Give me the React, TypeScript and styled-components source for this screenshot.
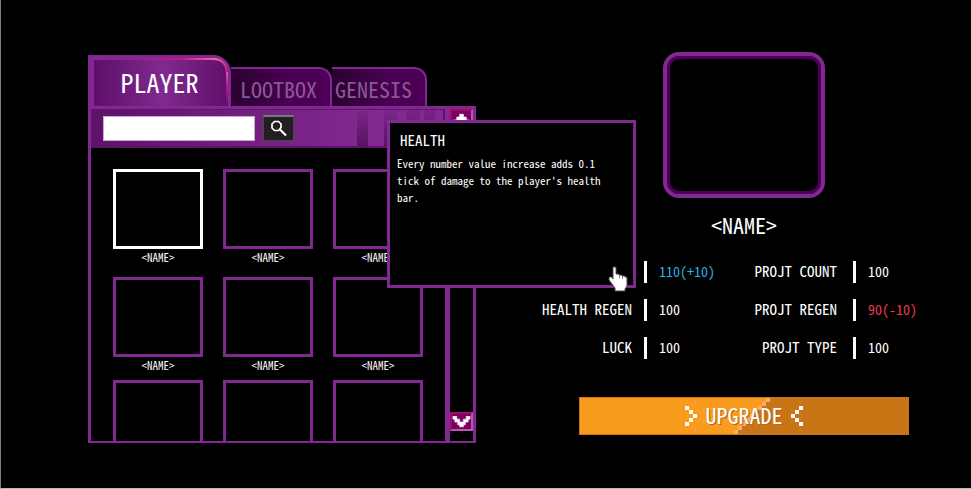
import React from "react";
import styled, { createGlobalStyle } from "styled-components";

const violet = "#812990";
const deep = "#4b0055";
const mono = `"Noto Sans CJK JP", "Liberation Mono", monospace`;

const GlobalStyle = createGlobalStyle`
  *, *::before, *::after { box-sizing: border-box; }
  html, body, #root { min-height: 100vh; }
  body {
    margin: 0;
    background: #000;
    color: #fff;
    font-family: ${mono};
    font-feature-settings: "hwid";
  }
  button, input {
    font: inherit;
    font-feature-settings: inherit;
    color: inherit;
    border: 0;
    margin: 0;
    padding: 0;
    background: none;
  }
  dl, dt, dd, p, h1, h2, h3, ul, li { margin: 0; padding: 0; list-style: none; font-weight: 400; }
`;

const Page = styled.main`
  display: grid;
  grid-template-columns: minmax(0, 388fr) minmax(0, 398fr);
  align-items: start;
  gap: 69px;
  min-height: 100vh;
  padding: 52px 28px 32px 87px;
  border-left: 1px solid #808080;
  border-bottom: 1px solid #b9b9b9;
`;

const Inventory = styled.section`
  padding-top: 3px;
`;

const Tabs = styled.div`
  display: flex;
  align-items: flex-end;
`;

const ActiveTab = styled.button`
  height: 51px;
  width: 143px;
  padding: 5px 3px 0 6px;
  background: ${violet};
  border-radius: 0 18px 0 0;
`;

const ActiveTabFace = styled.span`
  position: relative;
  display: flex;
  align-items: center;
  justify-content: center;
  height: 46px;
  padding: 0 3px 2px 0;
  background: linear-gradient(90deg, #5e1069, ${violet} 52%, #5e1069);
  border-radius: 0 14px 0 0;
  font-size: 26px;
  line-height: 26px;
`;

const Glow = styled.svg`
  position: absolute;
  top: -2px;
  right: 0;
  width: 100%;
  height: 48px;
`;

const Tab = styled.button<{ $width: number; $inset: number }>`
  height: 39px;
  width: ${(p) => p.$width}px;
  padding-left: ${(p) => p.$inset}px;
  border: solid ${violet};
  border-width: 2px 2px 0 0;
  border-radius: 0 13px 0 0;
  background: linear-gradient(90deg, #2a0030, ${deep} 60%);
  color: #875a90;
  font-size: 22px;
  line-height: 36px;
  text-align: left;
  white-space: nowrap;
`;

const Frame = styled.div`
  display: grid;
  grid-template-columns: minmax(0, 1fr) 28px;
  border: 3px solid ${violet};
  border-bottom-width: 2px;
`;

const Toolbar = styled.form`
  display: flex;
  align-items: center;
  gap: 8px;
  height: 39px;
  padding: 0 0 0 12px;
  border: solid #5e1269;
  border-width: 1px 2px 2px 0;
  background:
    linear-gradient(#7c278b, #571262) right 75px top / 11px 100% no-repeat,
    linear-gradient(#7c278b, #571262) right 46px top / 13px 100% no-repeat,
    linear-gradient(#772486, #64196f) right 23px top / 14px 100% no-repeat,
    linear-gradient(#772486, #64196f) right 8px top / 11px 100% no-repeat,
    linear-gradient(90deg, #5e1269, ${violet} 80%);
`;

const SearchInput = styled.input`
  width: 152px;
  height: 25px;
  padding: 0 6px;
  background: #fff;
  border: 1px solid #c9a9ce;
  color: #000;
  font-size: 14px;
`;

const SearchButton = styled.button`
  display: flex;
  align-items: center;
  justify-content: center;
  width: 31px;
  height: 26px;
  background: #231f20;
  border: 1px solid #4b4a4b;
  border-top: 2px solid #77787b;
`;

const Items = styled.ul`
  display: grid;
  grid-template-columns: repeat(3, minmax(0, 1fr));
  grid-template-rows: 108px 103px 80px;
  column-gap: 20px;
  height: 293px;
  padding: 21px 22px 0;
  overflow: hidden;
`;

const Slot = styled.button<{ $selected?: boolean }>`
  display: block;
  width: 100%;
  height: 80px;
  border: 3px solid ${(p) => (p.$selected ? "#fff" : violet)};
`;

const SlotName = styled.span`
  display: block;
  font-size: 11px;
  line-height: 16px;
  text-align: center;
`;

const ScrollBar = styled.div`
  display: flex;
  flex-direction: column;
  justify-content: space-between;
  padding-bottom: 10px;
  border-left: 5px solid ${violet};
`;

const ScrollButton = styled.button`
  display: flex;
  align-items: center;
  justify-content: center;
  height: 19px;
  background: #7c0064;
  border: 2px solid #b85aa4;
  border-left-color: #a20c64;
  border-top-color: #a20c64;
`;

const Character = styled.section`
  display: flex;
  flex-direction: column;
  align-items: center;
`;

const Portrait = styled.div`
  width: 162px;
  height: 146px;
  border: 4px solid ${violet};
  border-radius: 16px;
  box-shadow: inset 0 0 0 3px ${deep};
`;

const CharacterName = styled.h1`
  margin-top: 12px;
  font-size: 22px;
  line-height: 28px;
`;

const Stats = styled.dl`
  display: grid;
  grid-template-columns: minmax(0, 209fr) minmax(0, 189fr);
  gap: 16px 0;
  width: 100%;
  margin-top: 23px;
`;

const Stat = styled.div`
  position: relative;
  display: grid;
  grid-template-columns: 99px minmax(0, 1fr);
  height: 22px;
  line-height: 20px;
  white-space: nowrap;
`;

const StatLabel = styled.dt`
  display: flex;
  justify-content: flex-end;
  padding-right: 12px;
  font-size: 15px;
  ${Stat}:nth-child(even) & { padding-right: 16px; }
`;

const StatValue = styled.dd<{ $tone?: string }>`
  padding-left: 12px;
  border-left: 3px solid #fff;
  color: ${(p) => p.$tone ?? "#fff"};
  font-size: 14px;
`;

const Tooltip = styled.aside`
  position: absolute;
  z-index: 2;
  left: -158px;
  bottom: -5px;
  width: 249px;
  height: 168px;
  padding: 7px 28px 7px 7px;
  border: 3px solid ${violet};
  background: #000;
  white-space: normal;
`;

const TooltipTitle = styled.h2`
  padding-left: 3px;
  font-size: 15px;
  line-height: 20px;
`;

const TooltipText = styled.p`
  margin-top: 5px;
  font-size: 11px;
  line-height: 17px;
`;

const Hand = styled.svg`
  position: absolute;
  right: 5px;
  bottom: -7px;
`;

const Upgrade = styled.button`
  position: relative;
  display: flex;
  align-items: center;
  justify-content: center;
  gap: 8px;
  width: 83%;
  height: 38px;
  margin-top: 38px;
  border: 1px solid #c97516;
  background: linear-gradient(90deg, #f99b1c calc(50% - 10px), #c97516 calc(50% - 10px));
  font-size: 22px;
  line-height: 32px;
  text-shadow: 1px 1px 0 #b0651a;
`;

const Stairs = styled.svg`
  position: absolute;
  top: 0;
  left: calc(50% - 10px);
`;

const UpgradeText = styled.span`
  position: relative;
  padding-bottom: 4px;
`;

const Chevron = ({ flip = false }: { flip?: boolean }) => (
  <svg width="12" height="20" viewBox="0 0 12 20" shapeRendering="crispEdges" aria-hidden="true">
    <path
      fill="#fff"
      d={
        flip
          ? "M8 0h4v4H8zM4 4h4v4H4zM0 8h4v4H0zM4 12h4v4H4zM8 16h4v4H8z"
          : "M0 0h4v4H0zM4 4h4v4H4zM8 8h4v4H8zM4 12h4v4H4zM0 16h4v4H0z"
      }
    />
  </svg>
);

const PixelArrow = ({ up = false }: { up?: boolean }) => {
  const d = up
    ? "M8 1h4v3H8zM5 4h10v3H5zM2 7h6v3H2zM12 7h6v3h-6z"
    : "M1 0h4v3H1zM15 0h4v3h-4zM3 3h5v3H3zM12 3h5v3h-5zM6 6h8v3H6zM8 9h4v2H8z";
  return (
    <svg width="19" height="12" viewBox="0 0 20 12" aria-hidden="true">
      <path d={d} fill="#fff" stroke="#d9a3cd" strokeWidth="1" paintOrder="stroke" />
    </svg>
  );
};

const SearchIcon = () => (
  <svg width="17" height="17" viewBox="0 0 17 17" fill="none" stroke="#fff" aria-hidden="true">
    <path strokeWidth="1.7" d="M4.5 1.5h4l2.5 2.5v3.5L8.5 10.5h-4L2 8V4z" />
    <path strokeWidth="2.2" d="M10 9.5l6 6" />
  </svg>
);

const stairSteps = Array.from({ length: 9 }, (_, i) => i);

const stats: { label: string; value: string; tone?: string }[] = [
  { label: "HEALTH", value: "110(+10)", tone: "#1fb6e0" },
  { label: "PROJT COUNT", value: "100" },
  { label: "HEALTH REGEN", value: "100" },
  { label: "PROJT REGEN", value: "90(-10)", tone: "#f0384f" },
  { label: "LUCK", value: "100" },
  { label: "PROJT TYPE", value: "100" },
];

const namedSlots = 6;

const HealthTooltip = () => (
  <Tooltip role="tooltip">
    <TooltipTitle>HEALTH</TooltipTitle>
    <TooltipText>Every number value increase adds 0.1 tick of damage to the player's health bar.</TooltipText>
    <Hand width="20" height="26" viewBox="0 0 20 26" aria-hidden="true">
      <path
        fill="#fff"
        stroke="#4a4446"
        strokeWidth="1"
        d="M5 1h3v7h3v1h3v1h3v1h2v9l-2 3v2H7v-3l-3-4-3-4v-3h3l1 2z"
      />
      <path d="M11.5 9v3M14.5 10v3" stroke="#8a8486" strokeWidth="1" />
    </Hand>
  </Tooltip>
);

export default function App() {
  return (
    <>
      <GlobalStyle />
      <Page>
        <Inventory>
          <Tabs role="tablist">
            <ActiveTab role="tab" aria-selected="true">
              <ActiveTabFace>
                <Glow viewBox="0 0 134 48" aria-hidden="true">
                  <defs>
                    <linearGradient id="glow" x1="0" y1="0" x2="1" y2="0">
                      <stop offset="0.2" stopColor="#c4168c" stopOpacity="0" />
                      <stop offset="0.65" stopColor="#c4168c" />
                      <stop offset="0.92" stopColor="#f06aa0" />
                      <stop offset="1" stopColor="#d0208c" />
                    </linearGradient>
                    <linearGradient id="glowSide" x1="0" y1="0" x2="0" y2="1">
                      <stop offset="0" stopColor="#e05a9c" />
                      <stop offset="0.4" stopColor="#c4168c" />
                      <stop offset="1" stopColor="#c4168c" stopOpacity="0" />
                    </linearGradient>
                  </defs>
                  <path d="M0 1h119q13 0 14 14" fill="none" stroke="url(#glow)" strokeWidth="2" />
                  <path d="M132 14h2v34h-2z" fill="url(#glowSide)" />
                </Glow>
                PLAYER
              </ActiveTabFace>
            </ActiveTab>
            <Tab role="tab" aria-selected="false" $width={101} $inset={9}>LOOTBOX</Tab>
            <Tab role="tab" aria-selected="false" $width={95} $inset={3}>GENESIS</Tab>
          </Tabs>
          <Frame>
            <div>
              <Toolbar>
                <SearchInput type="search" aria-label="Search" />
                <SearchButton type="button" aria-label="Search items">
                  <SearchIcon />
                </SearchButton>
              </Toolbar>
              <Items>
                {Array.from({ length: 9 }, (_, i) => (
                  <li key={i}>
                    <Slot $selected={i === 0} aria-label={`Character ${i + 1}`} />
                    {i < namedSlots && <SlotName>&lt;NAME&gt;</SlotName>}
                  </li>
                ))}
              </Items>
            </div>
            <ScrollBar>
              <ScrollButton aria-label="Scroll up"><PixelArrow up /></ScrollButton>
              <ScrollButton aria-label="Scroll down"><PixelArrow /></ScrollButton>
            </ScrollBar>
          </Frame>
        </Inventory>
        <Character>
          <Portrait />
          <CharacterName>&lt;NAME&gt;</CharacterName>
          <Stats>
            {stats.map((s, i) => (
              <Stat key={s.label}>
                <StatLabel>
                  {s.label}
                  {i === 0 && <HealthTooltip />}
                </StatLabel>
                <StatValue $tone={s.tone}>{s.value}</StatValue>
              </Stat>
            ))}
          </Stats>
          <Upgrade>
            <Stairs width="36" height="36" viewBox="0 0 36 36" shapeRendering="crispEdges" aria-hidden="true">
              {stairSteps.map((i) => (
                <React.Fragment key={i}>
                  <rect x="0" y={32 - i * 4} width={i * 4} height="4" fill="#f99b1c" />
                  <rect x={i * 4} y={32 - i * 4} width="4" height="4" fill="#f7ae6c" />
                </React.Fragment>
              ))}
            </Stairs>
            <Chevron />
            <UpgradeText>UPGRADE</UpgradeText>
            <Chevron flip />
          </Upgrade>
        </Character>
      </Page>
    </>
  );
}
